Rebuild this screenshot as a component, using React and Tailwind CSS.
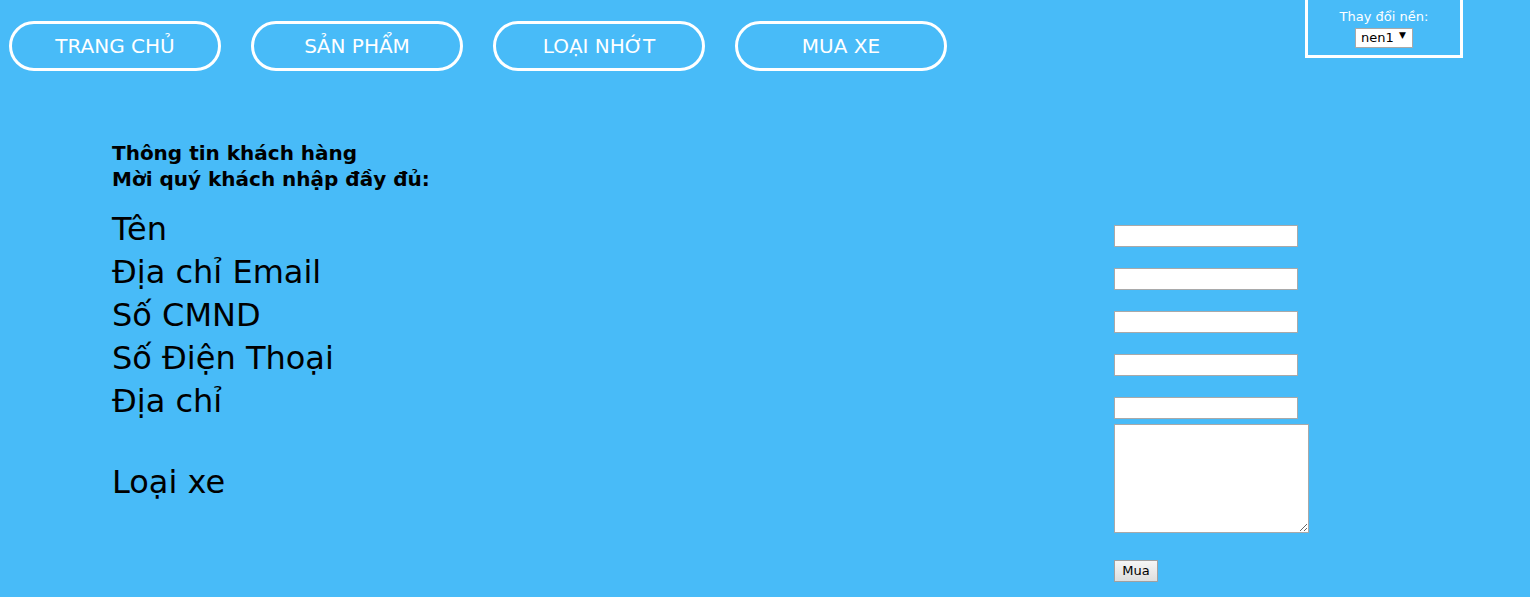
import React from 'react';

const navItems = ['TRANG CHỦ', 'SẢN PHẨM', 'LOẠI NHỚT', 'MUA XE'];
const labels = ['Tên', 'Địa chỉ Email', 'Số CMND', 'Số Điện Thoại', 'Địa chỉ'];

function App() {
  return (
    <div className="min-h-[597px] bg-[#48bbf8] font-['DejaVu_Sans',Verdana,sans-serif] text-black">
      <div className="flex items-start">
        <nav className="flex gap-[30px] pl-[9px] pt-[21px]">
          {navItems.map((item) => (
            <a
              key={item}
              href="#"
              className="flex h-[50px] w-[212px] items-center justify-center rounded-full border-[3px] border-white text-[20px] text-white"
            >
              {item}
            </a>
          ))}
        </nav>
        <div className="ml-auto mr-[67px] flex h-[58px] w-[158px] flex-col items-center border-x-[3px] border-b-[3px] border-white pt-[9px]">
          <span className="text-[13px] leading-[16px] text-white">Thay đổi nền:</span>
          <div className="relative">
            <select className="h-[20px] w-[58px] appearance-none border border-[#a9a9a9] bg-white pl-[5px] text-[13px] leading-none text-black outline-none">
              <option>nen1</option>
              <option>nen2</option>
            </select>
            <span className="pointer-events-none absolute right-[7px] top-[3px] text-[9px] leading-[14px] text-black">▼</span>
          </div>
        </div>
      </div>

      <div className="flex pl-[112px] pt-[69px]">
        <div className="w-[1002px]">
          <h3 className="text-[20px] font-bold leading-[26px]">
            Thông tin khách hàng
            <br />
            Mời quý khách nhập đầy đủ:
          </h3>
          <div className="mt-[16px] flex flex-col">
            {labels.map((l) => (
              <span key={l} className="text-[32px] leading-[43px]">
                {l}
              </span>
            ))}
            <span className="mt-[38px] text-[32px] leading-[43px]">Loại xe</span>
          </div>
        </div>

        <div className="flex flex-col pt-[85px]">
          {labels.map((l) => (
            <input
              key={l}
              type="text"
              className="mb-[21px] h-[22px] w-[184px] border border-[#a9a9a9] bg-white outline-none last-of-type:mb-[5px]"
            />
          ))}
          <textarea className="h-[109px] w-[195px] border border-[#a9a9a9] bg-white outline-none" />
          <button className="mt-[27px] h-[22px] w-[44px] border border-[#a0a0a0] bg-gradient-to-b from-[#f6f6f6] to-[#dedede] text-[13px]">
            Mua
          </button>
        </div>
      </div>
    </div>
  );
}

export default App;
